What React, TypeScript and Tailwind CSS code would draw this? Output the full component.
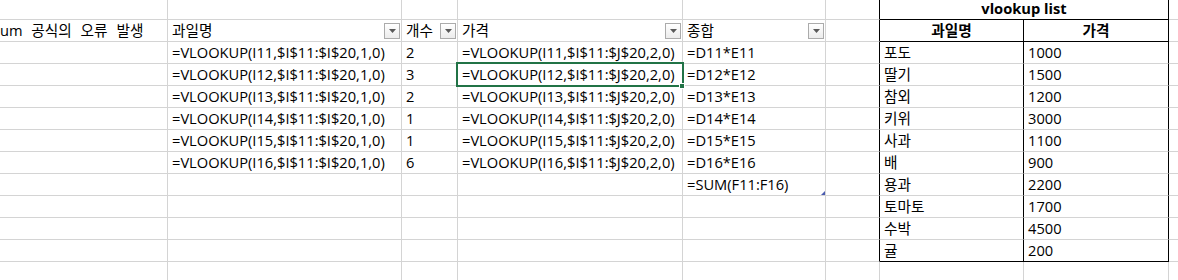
import type { ReactNode } from 'react';
import clsx from 'clsx';

type Line = 'grid' | 'black';

interface CellProps {
    w: string;
    right?: Line;
    bottom?: Line;
    center?: boolean;
    bold?: boolean;
    flush?: boolean;
    children?: ReactNode;
    extra?: ReactNode;
}

function Cell({ w, right = 'grid', bottom = 'grid', center, bold, flush, children, extra }: CellProps) {
    return (
        <div
            className={clsx(
                'relative flex h-full shrink-0 items-end whitespace-nowrap border-r border-b pb-[1px]',
                w,
                right === 'black' ? 'border-r-black' : 'border-r-[#d4d4d4]',
                bottom === 'black' ? 'border-b-black' : 'border-b-[#d4d4d4]',
                center ? 'justify-center' : flush ? 'pl-0' : 'pl-[4px]',
                bold && 'font-bold'
            )}
        >
            {children != null && <span className="leading-[20px]">{children}</span>}
            {extra}
        </div>
    );
}

// little autofilter button on the table header cells
function FilterButton() {
    return (
        <span className="absolute right-[1px] bottom-[2px] flex h-[16px] w-[16px] items-center justify-center border border-[#ababab] bg-gradient-to-b from-white to-[#ececec]">
            <svg width="7" height="4" viewBox="0 0 7 4">
                <path d="M0 0h7L3.5 4z" fill="#595959" />
            </svg>
        </span>
    );
}

const fruits = [
    ['포도', '1000'],
    ['딸기', '1500'],
    ['참외', '1200'],
    ['키위', '3000'],
    ['사과', '1100'],
    ['배', '900'],
    ['용과', '2200'],
    ['토마토', '1700'],
    ['수박', '4500'],
    ['귤', '200'],
];

const counts = [2, 3, 2, 1, 1, 6];

export default function App() {
    const rows = Array.from({ length: 13 }, (_, r) => r);

    return (
        <div className="h-[280px] w-[1178px] overflow-hidden bg-white text-[14.67px] text-black font-['Open_Sans','Noto_Sans_CJK_KR',sans-serif]">
            {rows.map((r) => {
                const i = r + 9;
                const isData = r >= 2 && r <= 7;
                const inTable = r <= 11;
                const fruit = r >= 2 && r <= 11 ? fruits[r - 2] : null;

                return (
                    <div key={r} className={clsx('flex', r === 0 ? 'h-[20px]' : 'h-[22px]')}>
                        <Cell w="w-[168px]" flush>
                            {r === 1 ? <span className="[word-spacing:5px]">um 공식의 오류 발생</span> : null}
                        </Cell>
                        <Cell w="w-[234px]" extra={r === 1 && <FilterButton />}>
                            {r === 1 ? '과일명' : isData ? `=VLOOKUP(I${i},$I$11:$I$20,1,0)` : null}
                        </Cell>
                        <Cell w="w-[56px]" extra={r === 1 && <FilterButton />}>
                            {r === 1 ? '개수' : isData ? counts[r - 2] : null}
                        </Cell>
                        <Cell
                            w="w-[225px]"
                            extra={
                                <>
                                    {r === 1 && <FilterButton />}
                                    {r === 3 && (
                                        <span className="absolute -top-[2px] -left-[2px] z-10 h-[25px] w-[228px] border-2 border-[#217346]">
                                            <span className="absolute top-[19px] left-[221px] h-[6px] w-[6px] border border-white bg-[#217346]" />
                                        </span>
                                    )}
                                </>
                            }
                        >
                            {r === 1 ? '가격' : isData ? `=VLOOKUP(I${i},$I$11:$J$20,2,0)` : null}
                        </Cell>
                        <Cell
                            w="w-[143px]"
                            extra={
                                <>
                                    {r === 1 && <FilterButton />}
                                    {r === 8 && (
                                        <svg className="absolute right-0 bottom-0" width="4" height="4" viewBox="0 0 4 4">
                                            <path d="M4 0v4H0z" fill="#4a5cb0" />
                                        </svg>
                                    )}
                                </>
                            }
                        >
                            {r === 1 ? '종합' : isData ? `=D${i}*E${i}` : r === 8 ? '=SUM(F11:F16)' : null}
                        </Cell>
                        <Cell w="w-[54px]" right={inTable ? 'black' : 'grid'} />
                        {r === 0 ? (
                            <Cell w="w-[289px]" right="black" bottom="black" center bold>
                                vlookup list
                            </Cell>
                        ) : (
                            <>
                                <Cell
                                    w="w-[144px]"
                                    right={inTable ? 'black' : 'grid'}
                                    bottom={r === 1 || r === 11 ? 'black' : 'grid'}
                                    center={r === 1}
                                    bold={r === 1}
                                >
                                    {r === 1 ? '과일명' : fruit ? fruit[0] : null}
                                </Cell>
                                <Cell
                                    w="w-[145px]"
                                    right={inTable ? 'black' : 'grid'}
                                    bottom={r === 1 || r === 11 ? 'black' : 'grid'}
                                    center={r === 1}
                                    bold={r === 1}
                                >
                                    {r === 1 ? '가격' : fruit ? fruit[1] : null}
                                </Cell>
                            </>
                        )}
                        <Cell w="w-[60px]" />
                    </div>
                );
            })}
        </div>
    );
}
